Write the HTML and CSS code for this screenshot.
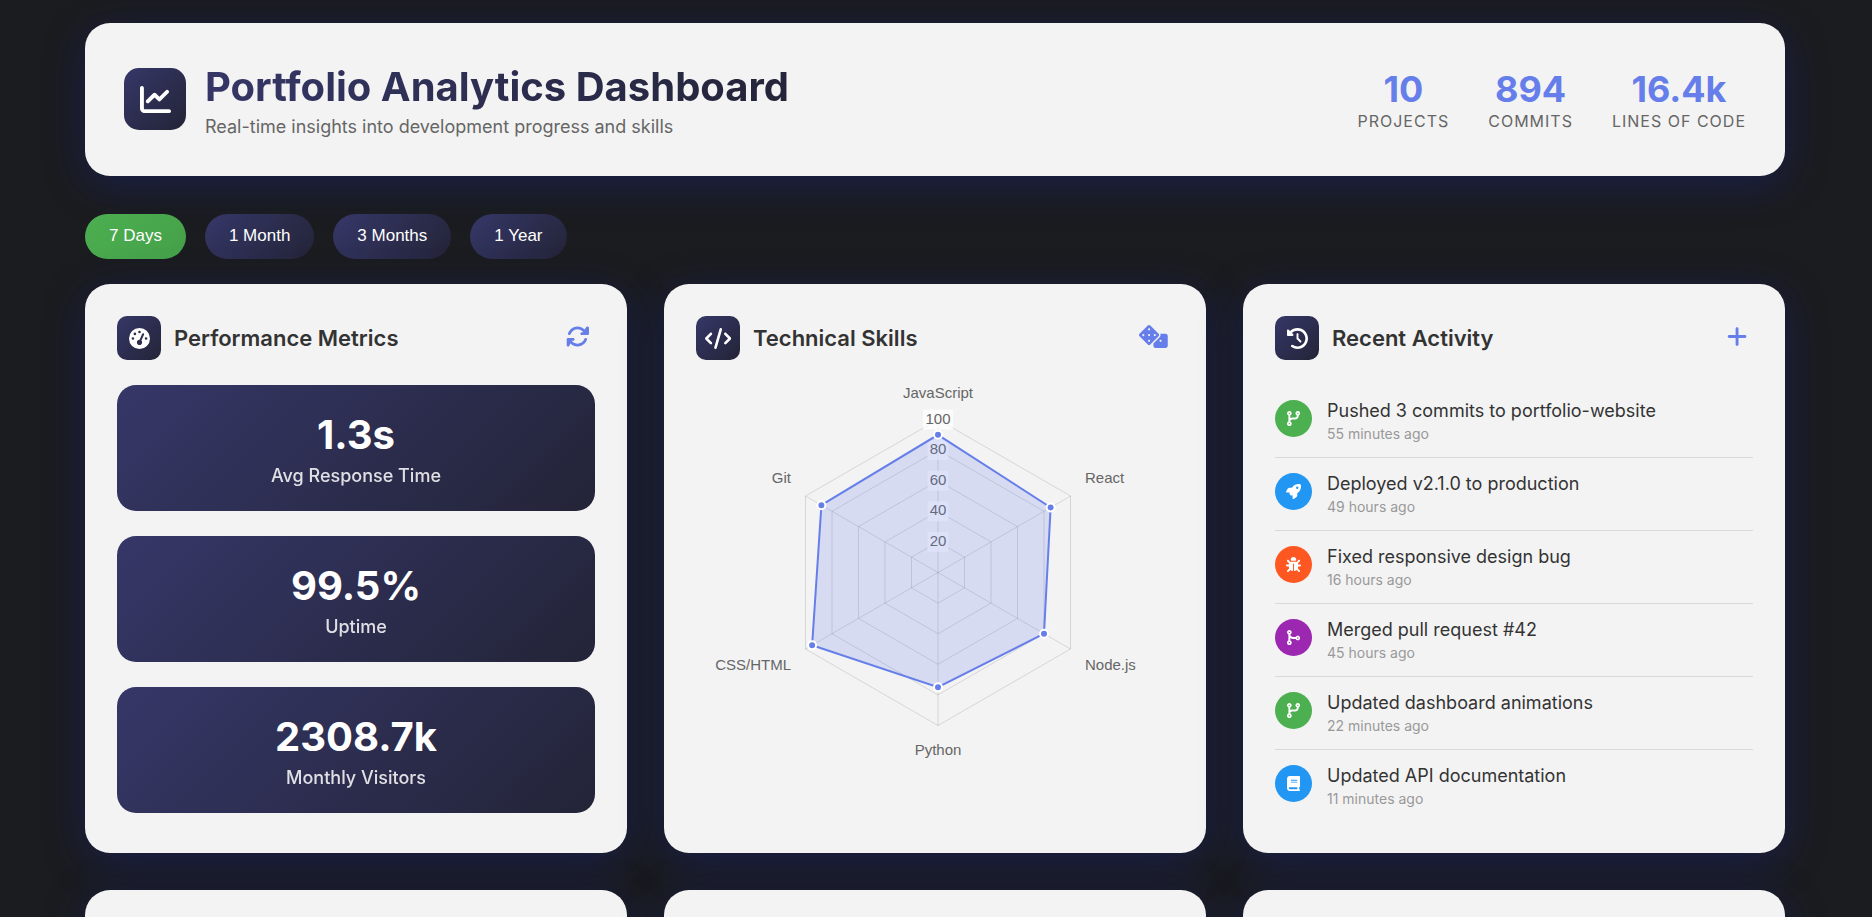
FILE: index.html
```html
<!DOCTYPE html>
<html lang="en">
<head>
<meta charset="utf-8">
<title>Portfolio Analytics Dashboard</title>
<link rel="stylesheet" href="styles.css">
</head>
<body>
<main class="dashboard">
  <header class="panel header">
    <div class="brand">
      <div class="brand-icon">
        <svg viewBox="0 0 512 512" fill="currentColor" aria-hidden="true"><path d="M64 64c0-17.700-14.300-32-32-32S0 46.300 0 64V400c0 44.200 35.800 80 80 80H480c17.700 0 32-14.300 32-32s-14.300-32-32-32H80c-8.800 0-16-7.200-16-16V64zm406.600 86.600c12.500-12.500 12.500-32.800 0-45.300s-32.800-12.500-45.300 0L320 210.700l-57.400-57.400c-12.500-12.500-32.800-12.500-45.300 0l-112 112c-12.500 12.500-12.500 32.800 0 45.300s32.800 12.500 45.300 0L240 221.300l57.400 57.400c12.500 12.500 32.800 12.500 45.300 0l128-128z"/></svg>
      </div>
      <div>
        <h1 class="title">Portfolio Analytics Dashboard</h1>
        <p class="subtitle">Real-time insights into development progress and skills</p>
      </div>
    </div>
    <dl class="stats">
      <div class="stat"><dt>Projects</dt><dd>10</dd></div>
      <div class="stat"><dt>Commits</dt><dd>894</dd></div>
      <div class="stat"><dt>Lines of Code</dt><dd>16.4k</dd></div>
    </dl>
  </header>

  <nav class="filters" aria-label="Time range">
    <button class="filter active" type="button">7 Days</button>
    <button class="filter" type="button">1 Month</button>
    <button class="filter" type="button">3 Months</button>
    <button class="filter" type="button">1 Year</button>
  </nav>

  <div class="grid">
    <section class="panel card">
      <div class="card-head">
        <div class="card-icon"><svg viewBox="0 0 512 512" fill="currentColor" aria-hidden="true"><path d="M0 256a256 256 0 1 1 512 0A256 256 0 1 1 0 256zM288 96a32 32 0 1 0-64 0 32 32 0 1 0 64 0zM256 416c35.300 0 64-28.700 64-64c0-17.400-6.900-33.100-18.100-44.600L366 161.700c5.300-12.100-.2-26.300-12.300-31.600s-26.300 .2-31.600 12.300L257.900 288c-.6 0-1.300 0-1.900 0c-35.300 0-64 28.700-64 64s28.700 64 64 64zM176 144a32 32 0 1 0-64 0 32 32 0 1 0 64 0zM96 288a32 32 0 1 0 0-64 32 32 0 1 0 0 64zm352-32a32 32 0 1 0-64 0 32 32 0 1 0 64 0z"/></svg></div>
        <h2 class="card-title">Performance Metrics</h2>
        <button class="card-action" type="button" aria-label="Refresh metrics"><svg viewBox="0 0 512 512" fill="currentColor" aria-hidden="true"><path d="M105.100 202.600c7.700-21.800 20.200-42.300 37.800-59.800c62.500-62.500 163.800-62.500 226.300 0L386.300 160H352c-17.700 0-32 14.300-32 32s14.300 32 32 32H463.500c.2 0 .3 0 .5 0h15.500c17.700 0 32-14.300 32-32V64c0-28.500-34.500-42.800-54.600-22.600L414.400 97.600c-87.500-87.500-229.300-87.500-316.800 0C73.200 122 55.600 150.700 44.800 181.400c-5.900 16.700 2.900 34.900 19.500 40.800s34.900-2.900 40.800-19.500zM39 289.300c-5 1.500-9.800 4.200-13.700 8.200c-6 6-9.300 14-9.300 22.500V448c0 28.500 34.500 42.800 54.600 22.600L97.600 414.400c87.500 87.400 229.300 87.400 316.700 0c24.400-24.400 42.100-53.100 52.900-83.700c5.900-16.700-2.900-34.900-19.500-40.800s-34.900 2.900-40.800 19.500c-7.700 21.800-20.200 42.300-37.800 59.800c-62.500 62.500-163.800 62.500-226.300 0L125.600 352H160c17.700 0 32-14.300 32-32s-14.300-32-32-32H48.400c-3.200 0-6.300 .4-9.400 1.300z"/></svg></button>
      </div>
      <div class="metrics">
        <div class="metric"><span class="metric-value">1.3s</span><span class="metric-label">Avg Response Time</span></div>
        <div class="metric"><span class="metric-value">99.5%</span><span class="metric-label">Uptime</span></div>
        <div class="metric"><span class="metric-value">2308.7k</span><span class="metric-label">Monthly Visitors</span></div>
      </div>
    </section>

    <section class="panel card">
      <div class="card-head">
        <div class="card-icon"><svg viewBox="0 0 640 512" fill="currentColor" aria-hidden="true"><path d="M392.800 1.200c-17-4.900-34.700 5-39.600 22l-128 448c-4.900 17 5 34.700 22 39.600s34.700-5 39.600-22l128-448c4.900-17-5-34.700-22-39.600zm80.600 120.100c-12.500 12.500-12.500 32.800 0 45.300L562.700 256l-89.400 89.400c-12.500 12.500-12.500 32.800 0 45.300s32.800 12.500 45.300 0l112-112c12.500-12.500 12.500-32.800 0-45.300l-112-112c-12.500-12.500-32.800-12.500-45.300 0zm-306.700 0c-12.500-12.500-32.800-12.500-45.300 0l-112 112c-12.500 12.500-12.500 32.800 0 45.300l112 112c12.500 12.500 32.800 12.500 45.300 0s12.500-32.800 0-45.300L77.300 256l89.400-89.400c12.500-12.500 12.500-32.800 0-45.300z"/></svg></div>
        <h2 class="card-title">Technical Skills</h2>
        <button class="card-action" type="button" aria-label="Randomize skills"><svg viewBox="0 0 640 512" fill="currentColor" aria-hidden="true"><path d="M252.300 11.700c-15.600-15.600-40.900-15.600-56.600 0l-184 184c-15.600 15.600-15.600 40.900 0 56.600l184 184c15.600 15.600 40.900 15.600 56.600 0l184-184c15.600-15.600 15.600-40.900 0-56.600l-184-184zM248 224a24 24 0 1 1-48 0 24 24 0 1 1 48 0zM96 248a24 24 0 1 1 0-48 24 24 0 1 1 0 48zm128 80a24 24 0 1 1 0 48 24 24 0 1 1 0-48zm128-80a24 24 0 1 1 0-48 24 24 0 1 1 0 48zM224 72a24 24 0 1 1 0 48 24 24 0 1 1 0-48zm96 392c0 26.500 21.500 48 48 48H592c26.500 0 48-21.500 48-48V240c0-26.500-21.500-48-48-48H472.500c13.400 26.900 8.800 60.500-13.600 82.900L320 413.800V464zm160-136a24 24 0 1 1 0 48 24 24 0 1 1 0-48z"/></svg></button>
      </div>
      <svg class="radar" viewBox="0 0 478 373" role="img" aria-label="Skill levels out of 100">
        <g id="radar-grid" class="radar-grid"></g>
        <g id="radar-ticks" class="radar-ticks"></g>
        <g id="radar-data"></g>
        <g class="radar-labels">
          <text x="242" y="13" text-anchor="middle">JavaScript</text>
          <text x="389" y="98">React</text>
          <text x="389" y="285">Node.js</text>
          <text x="242" y="370" text-anchor="middle">Python</text>
          <text x="95" y="285" text-anchor="end">CSS/HTML</text>
          <text x="95" y="98" text-anchor="end">Git</text>
        </g>
      </svg>
    </section>

    <section class="panel card">
      <div class="card-head">
        <div class="card-icon"><svg viewBox="0 0 512 512" fill="currentColor" aria-hidden="true"><path d="M75 75L41 41C25.900 25.900 0 36.600 0 57.900V168c0 13.300 10.700 24 24 24H134.100c21.400 0 32.100-25.900 17-41l-30.800-30.800C155 85.500 203 64 256 64c106 0 192 86 192 192s-86 192-192 192c-40.800 0-78.600-12.700-109.700-34.400c-14.500-10.100-34.400-6.600-44.600 7.900s-6.600 34.400 7.900 44.600C151.200 495 201.700 512 256 512c141.400 0 256-114.600 256-256S397.400 0 256 0C185.300 0 121.300 28.700 75 75zm181 53c-13.300 0-24 10.700-24 24V256c0 6.400 2.500 12.500 7 17l72 72c9.400 9.400 24.600 9.400 33.900 0s9.400-24.600 0-33.900l-65-65V152c0-13.300-10.700-24-24-24z"/></svg></div>
        <h2 class="card-title">Recent Activity</h2>
        <button class="card-action" type="button" aria-label="Add activity"><svg viewBox="0 0 448 512" fill="currentColor" aria-hidden="true"><path d="M256 80c0-17.700-14.300-32-32-32s-32 14.300-32 32V224H48c-17.700 0-32 14.300-32 32s14.300 32 32 32H192V432c0 17.700 14.300 32 32 32s32-14.300 32-32V288H400c17.700 0 32-14.300 32-32s-14.300-32-32-32H256V80z"/></svg></button>
      </div>
      <ul class="activity">
        <li class="item">
          <span class="badge green"><svg viewBox="0 0 448 512" fill="currentColor" aria-hidden="true"><path id="branch" d="M80 104a24 24 0 1 0 0-48 24 24 0 1 0 0 48zm80-24c0 32.800-19.700 61-48 73.300v87.800c18.800-10.900 40.700-17.100 64-17.100h96c35.300 0 64-28.700 64-64v-6.700C307.700 141 288 112.800 288 80c0-44.200 35.800-80 80-80s80 35.800 80 80c0 32.800-19.700 61-48 73.300V160c0 70.700-57.300 128-128 128H176c-35.300 0-64 28.700-64 64v6.700c28.300 12.300 48 40.500 48 73.300c0 44.200-35.800 80-80 80s-80-35.800-80-80c0-32.800 19.700-61 48-73.300V352 153.300C19.700 141 0 112.800 0 80C0 35.800 35.800 0 80 0s80 35.800 80 80zm232 0a24 24 0 1 0-48 0 24 24 0 1 0 48 0zM80 456a24 24 0 1 0 0-48 24 24 0 1 0 0 48z"/></svg></span>
          <div><p class="item-title">Pushed 3 commits to portfolio-website</p><p class="item-time">55 minutes ago</p></div>
        </li>
        <li class="item">
          <span class="badge blue"><svg viewBox="0 0 512 512" fill="currentColor" aria-hidden="true"><path d="M156.600 384.900L125.700 354c-8.500-8.500-11.500-20.800-7.700-32.200c3-8.900 7-20.500 11.800-33.800L24 288c-8.600 0-16.600-4.600-20.900-12.100s-4.200-16.700 .2-24.100l52.500-88.500c13-21.900 36.500-35.300 61.900-35.300l82.300 0c2.400-4 4.800-7.700 7.200-11.300C289.100-4.100 411.100-8.100 483.900 5.300c11.600 2.100 20.600 11.200 22.800 22.800c13.400 72.900 9.300 194.800-111.400 276.700c-3.500 2.400-7.300 4.800-11.300 7.200v82.300c0 25.400-13.400 49-35.300 61.900l-88.500 52.500c-7.400 4.400-16.600 4.500-24.100 .2s-12.100-12.200-12.100-20.900V380.800c-14.100 4.900-26.400 8.900-35.700 11.900c-11.200 3.600-23.400 .5-31.800-7.800zM384 168a40 40 0 1 0 0-80 40 40 0 1 0 0 80z"/></svg></span>
          <div><p class="item-title">Deployed v2.1.0 to production</p><p class="item-time">49 hours ago</p></div>
        </li>
        <li class="item">
          <span class="badge orange"><svg viewBox="0 0 512 512" fill="currentColor" aria-hidden="true"><path d="M256 0c53 0 96 43 96 96v3.600c0 15.700-12.700 28.400-28.400 28.400H188.400c-15.700 0-28.400-12.700-28.400-28.400V96c0-53 43-96 96-96zM41.400 105.400c12.500-12.500 32.800-12.500 45.300 0l64 64c.7 .7 1.300 1.400 1.900 2.100c14.200-7.300 30.400-11.400 47.500-11.400H312c17.100 0 33.200 4.100 47.500 11.400c.6-.7 1.200-1.400 1.900-2.100l64-64c12.500-12.500 32.800-12.500 45.300 0s12.500 32.800 0 45.300l-64 64c-.7 .7-1.400 1.300-2.100 1.900c6.200 12 10.100 25.300 11.100 39.500H480c17.700 0 32 14.300 32 32s-14.300 32-32 32H416c0 24.600-5.500 47.800-15.400 68.600c2.200 1.300 4.200 2.900 6 4.800l64 64c12.500 12.500 12.500 32.800 0 45.300s-32.800 12.500-45.300 0l-63.100-63.100c-24.500 21.800-55.800 36.200-90.300 39.600V240c0-8.800-7.200-16-16-16s-16 7.200-16 16V479.200c-34.500-3.400-65.800-17.800-90.300-39.600L86.600 502.600c-12.500 12.500-32.800 12.500-45.300 0s-12.500-32.800 0-45.300l64-64c1.900-1.900 3.900-3.400 6-4.800C101.500 367.800 96 344.600 96 320H32c-17.700 0-32-14.300-32-32s14.300-32 32-32H96.300c1.100-14.100 5-27.500 11.100-39.500c-.7-.6-1.400-1.200-2.100-1.900l-64-64c-12.500-12.500-12.500-32.800 0-45.300z"/></svg></span>
          <div><p class="item-title">Fixed responsive design bug</p><p class="item-time">16 hours ago</p></div>
        </li>
        <li class="item">
          <span class="badge purple"><svg viewBox="0 0 448 512" fill="currentColor" aria-hidden="true"><path d="M80 56a24 24 0 1 1 0 48 24 24 0 1 1 0-48zm32.400 97.200c28-12.400 47.600-40.500 47.600-73.200c0-44.200-35.800-80-80-80S0 35.800 0 80c0 32.800 19.700 61 48 73.300V358.700C19.700 371 0 399.200 0 432c0 44.200 35.800 80 80 80s80-35.800 80-80c0-32.800-19.700-61-48-73.300V272c26.700 20.100 60 32 96 32h86.700c12.300 28.300 40.500 48 73.300 48c44.200 0 80-35.800 80-80s-35.800-80-80-80c-32.800 0-61 19.700-73.300 48H208c-49.900 0-91-38.100-95.600-86.800zM80 408a24 24 0 1 1 0 48 24 24 0 1 1 0-48zM344 272a24 24 0 1 1 48 0 24 24 0 1 1-48 0z"/></svg></span>
          <div><p class="item-title">Merged pull request #42</p><p class="item-time">45 hours ago</p></div>
        </li>
        <li class="item">
          <span class="badge green"><svg viewBox="0 0 448 512" fill="currentColor" aria-hidden="true"><use href="#branch"/></svg></span>
          <div><p class="item-title">Updated dashboard animations</p><p class="item-time">22 minutes ago</p></div>
        </li>
        <li class="item">
          <span class="badge blue"><svg viewBox="0 0 448 512" fill="currentColor" aria-hidden="true"><path d="M96 0C43 0 0 43 0 96V416c0 53 43 96 96 96H384h32c17.700 0 32-14.300 32-32s-14.300-32-32-32V384c17.700 0 32-14.300 32-32V32c0-17.700-14.300-32-32-32H384 96zm0 384H352v64H96c-17.700 0-32-14.300-32-32s14.300-32 32-32zm32-240c0-8.800 7.200-16 16-16H336c8.800 0 16 7.200 16 16s-7.200 16-16 16H144c-8.800 0-16-7.200-16-16zm16 48H336c8.800 0 16 7.200 16 16s-7.200 16-16 16H144c-8.800 0-16-7.200-16-16s7.200-16 16-16z"/></svg></span>
          <div><p class="item-title">Updated API documentation</p><p class="item-time">11 minutes ago</p></div>
        </li>
      </ul>
    </section>

    <section class="panel card"></section>
    <section class="panel card"></section>
    <section class="panel card"></section>
  </div>
</main>
<script src="radar.js"></script>
</body>
</html>
```
FILE: styles.css
```css
* {
  box-sizing: border-box;
  margin: 0;
  padding: 0;
}

body {
  background: #1a1c1f;
  color: #333;
  font-family: Inter, "Liberation Sans", sans-serif;
}

.dashboard {
  padding: 23px 87px 23px 85px;
}

.panel {
  background: rgba(255, 255, 255, 0.95);
  border-radius: 25px;
  box-shadow: 0 9px 42px rgba(31, 38, 135, 0.4);
}

.header {
  display: flex;
  align-items: center;
  justify-content: space-between;
  padding: 37px 39px 38px;
  margin-bottom: 38px;
}

.brand {
  display: flex;
  align-items: center;
  gap: 19px;
}

.brand-icon,
.card-icon {
  display: flex;
  align-items: center;
  justify-content: center;
  flex: none;
  color: #fff;
  background: linear-gradient(135deg, #363768, #232437);
}

.brand-icon {
  width: 62px;
  height: 62px;
  border-radius: 15px;
}

.brand-icon svg {
  height: 31px;
}

.title {
  width: fit-content;
  padding-top: 2px;
  font-size: 40px;
  line-height: 50px;
  font-weight: 700;
  color: transparent;
  background: linear-gradient(135deg, #363768, #232437);
  background-clip: text;
}

.subtitle {
  margin-top: 4px;
  font-size: 18px;
  line-height: 22px;
  color: #666;
}

.stats {
  display: flex;
  gap: 39px;
}

.stat {
  display: flex;
  flex-direction: column-reverse;
  padding-top: 4px;
  text-align: center;
}

.stat dd {
  font-size: 36px;
  line-height: 40px;
  font-weight: 700;
  color: #667eea;
}

.stat dt {
  font-size: 16px;
  line-height: 24px;
  letter-spacing: 1px;
  text-transform: uppercase;
  color: #666;
}

.filters {
  display: flex;
  gap: 19px;
  margin-bottom: 25px;
}

.filter {
  height: 45px;
  padding: 0 24px 2px;
  border: 0;
  border-radius: 25px;
  font: 500 17px "Liberation Sans", sans-serif;
  color: #fff;
  background: linear-gradient(135deg, #363768, #232437);
}

.filter.active {
  background: linear-gradient(135deg, #4caf50, #45a049);
}

.grid {
  display: grid;
  grid-template-columns: repeat(3, 1fr);
  gap: 37px;
}

.card {
  min-height: 320px;
  padding: 32px 32px 31px;
}

.card-head {
  display: flex;
  align-items: center;
  gap: 13px;
  margin-bottom: 25px;
}

.card-icon {
  width: 44px;
  height: 44px;
  border-radius: 10px;
}

.card-icon svg {
  height: 21px;
}

.card-title {
  flex: 1;
  font-size: 22px;
  line-height: 28px;
  font-weight: 600;
}

.card-action {
  display: flex;
  padding: 0 6px 3px;
  border: 0;
  background: none;
  color: #667eea;
}

.card-action svg {
  height: 23px;
}

.metrics {
  display: flex;
  flex-direction: column;
  gap: 25px;
}

.metric {
  display: flex;
  flex-direction: column;
  padding: 26px 25px 24px;
  border-radius: 19px;
  text-align: center;
  color: #fff;
  background: linear-gradient(135deg, #363768, #232437);
}

.metric-value {
  font-size: 40px;
  line-height: 48px;
  font-weight: 700;
}

.metric-label {
  margin-top: 6px;
  font-size: 18px;
  line-height: 22px;
  font-weight: 500;
  opacity: 0.85;
}

.radar {
  display: block;
  width: 100%;
  font-family: "Liberation Sans", sans-serif;
  font-size: 15px;
  fill: #666;
}

.radar-grid {
  fill: none;
  stroke: rgba(0, 0, 0, 0.12);
}

.radar-backdrop {
  fill: rgba(255, 255, 255, 0.75);
}

.radar-area {
  fill: rgba(102, 126, 234, 0.2);
  stroke: #667eea;
  stroke-width: 2;
}

.radar-point {
  fill: #667eea;
  stroke: #fff;
  stroke-width: 2;
}

.activity {
  list-style: none;
}

.item {
  display: flex;
  align-items: flex-start;
  gap: 15px;
  padding: 15px 0 14px;
  border-bottom: 1px solid #d9d9d9;
}

.item:last-child {
  border-bottom: 0;
}

.badge {
  display: flex;
  align-items: center;
  justify-content: center;
  flex: none;
  width: 37px;
  height: 37px;
  border-radius: 50%;
  color: #fff;
}

.badge svg {
  height: 15px;
}

.green {
  background: #4caf50;
}

.blue {
  background: #2196f3;
}

.orange {
  background: #ff5722;
}

.purple {
  background: #9c27b0;
}

.item-title {
  font-size: 18px;
  line-height: 22px;
}

.item-time {
  margin-top: 2px;
  font-size: 14px;
  line-height: 19px;
  color: #999;
}
```
FILE: radar.js
```js
const NS = "http://www.w3.org/2000/svg";
const center = { x: 242, y: 187.5 };
const radius = 153;
const skills = [90, 85, 80, 75, 95, 88];

function point(index, value) {
  const angle = (index * Math.PI) / 3;
  const r = (radius * value) / 100;
  return [center.x + r * Math.sin(angle), center.y - r * Math.cos(angle)];
}

function add(parent, name, attrs, text) {
  const el = document.createElementNS(NS, name);
  for (const key in attrs) el.setAttribute(key, attrs[key]);
  if (text) el.textContent = text;
  parent.appendChild(el);
}

const grid = document.getElementById("radar-grid");
const ticks = document.getElementById("radar-ticks");
const data = document.getElementById("radar-data");

for (let level = 20; level <= 100; level += 20) {
  add(grid, "polygon", { points: skills.map((_, i) => point(i, level)).join(" ") });
  const y = point(0, level)[1];
  const width = level === 100 ? 30 : 21;
  add(ticks, "rect", { class: "radar-backdrop", x: center.x - width / 2, y: y - 10, width: width, height: 20 });
  add(ticks, "text", { x: center.x, y: y + 4, "text-anchor": "middle" }, String(level));
}

skills.forEach((_, i) => {
  const [x, y] = point(i, 100);
  add(grid, "line", { x1: center.x, y1: center.y, x2: x, y2: y });
});

add(data, "polygon", { class: "radar-area", points: skills.map((v, i) => point(i, v)).join(" ") });
skills.forEach((v, i) => {
  const [x, y] = point(i, v);
  add(data, "circle", { class: "radar-point", cx: x, cy: y, r: 4 });
});
```
